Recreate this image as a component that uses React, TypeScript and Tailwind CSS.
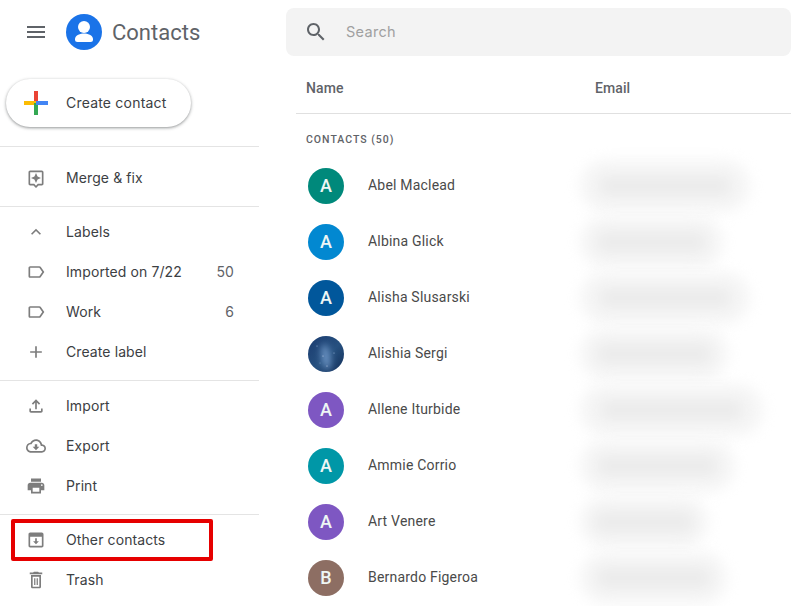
import type { ReactNode } from "react"

function Icon({ d, className = "w-5 h-5", fill = "#7d7d7d" }: { d: string; className?: string; fill?: string }) {
  return (
    <svg viewBox="0 0 24 24" className={`${className} shrink-0`} fill={fill}>
      <path d={d} />
    </svg>
  )
}

const paths = {
  menu: "M3 18h18v-2H3v2zm0-5h18v-2H3v2zm0-7v2h18V6H3z",
  merge:
    "M19 3H5c-1.1 0-2 .9-2 2v14c0 1.1.9 2 2 2h4l3 3 3-3h4c1.1 0 2-.9 2-2V5c0-1.1-.9-2-2-2zm0 16h-4.83l-.59.59L12 21.17l-1.59-1.59-.58-.58H5V5h14v14zM12 18l1.88-4.12L18 12l-4.12-1.88L12 6l-1.88 4.12L6 12l4.12 1.88z",
  up: "M12 8l-6 6 1.41 1.41L12 10.83l4.59 4.58L18 14z",
  label:
    "M17.63 5.84C17.27 5.33 16.67 5 16 5L5 5.01C3.9 5.01 3 5.9 3 7v10c0 1.1.9 1.99 2 1.99L16 19c.67 0 1.27-.33 1.63-.84L22 12l-4.37-6.16zM16 17H5V7h11l3.55 5L16 17z",
  add: "M19 13h-6v6h-2v-6H5v-2h6V5h2v6h6v2z",
  upload: "M18 15v3H6v-3H4v3c0 1.1.9 2 2 2h12c1.1 0 2-.9 2-2v-3h-2zM7 9l1.41 1.41L11 7.83V16h2V7.83l2.59 2.58L17 9l-5-5-5 5z",
  cloud:
    "M19.35 10.04C18.67 6.59 15.64 4 12 4 9.11 4 6.6 5.64 5.35 8.04 2.34 8.36 0 10.91 0 14c0 3.31 2.69 6 6 6h13c2.76 0 5-2.24 5-5 0-2.64-2.05-4.78-4.65-4.96zM19 18H6c-2.21 0-4-1.79-4-4 0-2.05 1.53-3.76 3.56-3.97l1.07-.11.5-.95C8.08 7.14 9.94 6 12 6c2.62 0 4.88 1.86 5.39 4.43l.3 1.5 1.53.11c1.56.1 2.78 1.41 2.78 2.96 0 1.65-1.35 3-3 3zm-5.55-8h-2.9v3H8l4 4 4-4h-2.55z",
  print:
    "M19 8H5c-1.66 0-3 1.34-3 3v6h4v4h12v-4h4v-6c0-1.66-1.34-3-3-3zm-3 11H8v-5h8v5zm3-7c-.55 0-1-.45-1-1s.45-1 1-1 1 .45 1 1-.45 1-1 1zm-1-9H6v4h12V3z",
  other:
    "M19 3H5c-1.1 0-2 .9-2 2v14c0 1.1.9 2 2 2h14c1.1 0 2-.9 2-2V5c0-1.1-.9-2-2-2zm0 16H5V8h14v11zM13 10h-2v3.5H8.5l3.5 3.5 3.5-3.5H13V10z",
  trash:
    "M6 20c0 1.1.9 2 2 2h8c1.1 0 2-.9 2-2V6H6v14zM8 8h8v12H8V8zm7.5-5l-1-1h-5l-1 1H4.5v2h15V3zM9.75 10h1.5v8h-1.5zM12.75 10h1.5v8h-1.5z",
  search:
    "M15.5 14h-.79l-.28-.27C15.41 12.59 16 11.11 16 9.5 16 5.91 13.09 3 9.5 3S3 5.91 3 9.5 5.91 16 9.5 16c1.61 0 3.09-.59 4.23-1.57l.27.28v.79l5 4.99L20.49 19l-4.99-5zm-6 0C7.01 14 5 11.99 5 9.5S7.01 5 9.5 5 14 7.01 14 9.5 11.99 14 9.5 14z",
}

function NavRow({ icon, children, count }: { icon: string; children: ReactNode; count?: string }) {
  return (
    <div className="flex items-center h-10 pl-[26px] pr-[25px] font-['Inter',sans-serif] text-[14px] tracking-[0.1px] text-[#3c4043]">
      <Icon d={icon} />
      <span className="ml-5 -mt-0.5 flex-1">{children}</span>
      {count && <span className="-mt-0.5 text-[#5f6368]">{count}</span>}
    </div>
  )
}

function NightPhoto() {
  return (
    <svg viewBox="0 0 36 36" className="w-9 h-9 rounded-full shrink-0">
      <defs>
        <linearGradient id="sky" x1="0" y1="0" x2="1" y2="1">
          <stop offset="0" stopColor="#1b3c70" />
          <stop offset="0.55" stopColor="#26507f" />
          <stop offset="1" stopColor="#14305a" />
        </linearGradient>
        <filter id="soft" x="-100%" y="-100%" width="300%" height="300%">
          <feGaussianBlur stdDeviation="3.5" />
        </filter>
      </defs>
      <rect width="36" height="36" fill="url(#sky)" />
      <ellipse cx="18" cy="21" rx="4" ry="13" fill="#6f98c8" filter="url(#soft)" transform="rotate(-8 18 21)" />
      <circle cx="9" cy="10" r="0.5" fill="#a9c4e6" />
      <circle cx="15" cy="20" r="0.5" fill="#cfe0f5" />
      <circle cx="26" cy="17" r="0.5" fill="#a9c4e6" />
      <circle cx="19" cy="30" r="0.5" fill="#cfe0f5" />
      <circle cx="12" cy="27" r="0.4" fill="#a9c4e6" />
    </svg>
  )
}

const contacts = [
  { name: "Abel Maclead", bg: "bg-[#00897b]", blob: "w-[170px]" },
  { name: "Albina Glick", bg: "bg-[#0288d1]", blob: "w-[143px]" },
  { name: "Alisha Slusarski", bg: "bg-[#01579b]", blob: "w-[170px]" },
  { name: "Alishia Sergi", blob: "w-[148px]", photo: true },
  { name: "Allene Iturbide", bg: "bg-[#7e57c2]", blob: "w-[183px]" },
  { name: "Ammie Corrio", bg: "bg-[#0097a7]", blob: "w-[155px]" },
  { name: "Art Venere", bg: "bg-[#7e57c2]", blob: "w-[128px]" },
  { name: "Bernardo Figeroa", bg: "bg-[#8d6e63]", letter: "B", blob: "w-[147px]" },
]

export default function App() {
  return (
    <div className="relative flex h-[606px] w-[791px] overflow-hidden bg-white font-['Roboto',sans-serif]">
      <aside className="w-[259px] shrink-0">
        <div className="flex items-center h-16 pl-6">
          <Icon d={paths.menu} className="w-6 h-6" fill="#5f6368" />
          <svg viewBox="0 0 36 36" className="ml-[18px] w-9 h-9 shrink-0">
            <circle cx="18" cy="18" r="18" fill="#1a73e8" />
            <circle cx="18" cy="13" r="6" fill="#fff" />
            <path d="M9 25c0-4 5.6-5.6 9-5.6s9 1.6 9 5.6v.5a2.5 2.5 0 0 1-2.5 2.5h-13A2.5 2.5 0 0 1 9 25.5z" fill="#fff" />
          </svg>
          <span className="ml-[10px] text-[22px] text-[#5f6368]">Contacts</span>
        </div>

        <div className="h-[83px] pt-[15px] pl-[6px] border-b border-[#e4e4e4]">
          <div className="flex items-center w-[185px] h-12 rounded-full bg-white shadow-[0_1px_3px_1px_rgba(60,64,67,0.2),0_1px_2px_rgba(60,64,67,0.3)]">
            <svg viewBox="0 0 24 24" className="ml-[18px] w-6 h-6 shrink-0">
              <rect x="10" y="0" width="4" height="12" fill="#ea4335" />
              <rect x="0" y="10" width="12" height="4" fill="#fbbc04" />
              <rect x="10" y="12" width="4" height="12" fill="#34a853" />
              <rect x="12" y="10" width="12" height="4" fill="#4285f4" />
            </svg>
            <span className="ml-[18px] -mt-0.5 font-['Inter',sans-serif] text-[14px] tracking-[0.2px] text-[#3c4043]">Create contact</span>
          </div>
        </div>

        <div className="pt-[11px] pb-2 border-b border-[#e4e4e4]">
          <NavRow icon={paths.merge}>Merge &amp; fix</NavRow>
        </div>

        <div className="pt-[5px] pb-2 border-b border-[#e4e4e4]">
          <NavRow icon={paths.up}>Labels</NavRow>
          <NavRow icon={paths.label} count="50">Imported on 7/22</NavRow>
          <NavRow icon={paths.label} count="6">Work</NavRow>
          <NavRow icon={paths.add}>Create label</NavRow>
        </div>

        <div className="pt-[5px] pb-2 border-b border-[#e4e4e4]">
          <NavRow icon={paths.upload}>Import</NavRow>
          <NavRow icon={paths.cloud}>Export</NavRow>
          <NavRow icon={paths.print}>Print</NavRow>
        </div>

        <div className="pt-[5px]">
          <NavRow icon={paths.other}>Other contacts</NavRow>
          <NavRow icon={paths.trash}>Trash</NavRow>
        </div>
      </aside>

      <main className="flex-1 pl-[27px] pt-2 min-w-0">
        <div className="flex items-center h-12 rounded-lg bg-[#f3f3f3] pl-[18px]">
          <Icon d={paths.search} className="w-6 h-6" fill="#5f6368" />
          <span className="ml-[18px] font-['Inter',sans-serif] text-[14.5px] tracking-[0.3px] text-[#a0a0a0]">Search</span>
        </div>

        <div className="ml-[10px] flex items-center h-[58px] pt-2 border-b border-[#e0e0e0] pl-[10px] text-[14px] font-medium tracking-[0.1px] text-[#5f6368]">
          <span className="w-[289px]">Name</span>
          <span>Email</span>
        </div>

        <div className="pl-5 pt-[18px] text-[10.5px] font-medium tracking-[1px] text-[#5f6368]">CONTACTS (50)</div>

        <div className="mt-[10px]">
          {contacts.map((c) => (
            <div key={c.name} className="flex items-center h-14 pl-[22px]">
              {c.photo ? (
                <NightPhoto />
              ) : (
                <div className={`flex items-center justify-center w-9 h-9 rounded-full shrink-0 text-[18px] font-medium text-[#eef6f5] ${c.bg}`}>
                  {c.letter ?? "A"}
                </div>
              )}
              <span className="ml-6 w-[212px] shrink-0 text-[14px] tracking-[0.2px] text-[#4a4a4a]">{c.name}</span>
              <div className={`flex items-center justify-center h-[52px] rounded-full bg-[#f5f5f5] blur-[7px] ${c.blob}`}>
                <div className="w-[78%] h-[20px] rounded-full bg-[#ebebeb]" />
              </div>
            </div>
          ))}
        </div>
      </main>

      {/* red annotation box over the sidebar */}
      <div className="absolute left-[11px] top-[519px] w-[202px] h-[42px] border-4 border-[#e60000] rounded-[2px]" />
    </div>
  )
}
